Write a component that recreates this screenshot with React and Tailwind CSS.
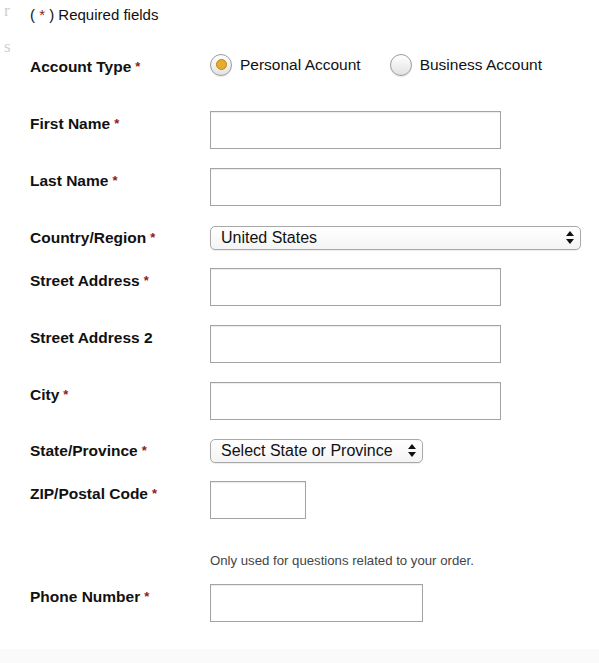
import React, { useState } from 'react';

const font = { fontFamily: '"Liberation Sans", Arial, sans-serif' };

function Star() {
  return <span className="text-[#8b1c1c] text-[13px] align-top ml-[4px]">*</span>;
}

function Label({ text, required, pad = 'pt-[4px]' }) {
  return (
    <div className={`w-[180px] shrink-0 ${pad} text-[15.5px] leading-[18px] font-bold text-[#111]`}>
      {text}
      {required && <Star />}
    </div>
  );
}

function TextBox({ width }) {
  return (
    <input
      type="text"
      className={`${width} h-[38px] border border-[#a3a3a3] bg-white shadow-[inset_0_1px_1px_rgba(0,0,0,0.08)] outline-none px-2 text-[15px]`}
    />
  );
}

function Arrows() {
  return (
    <svg width="8" height="13" viewBox="0 0 8 13" className="absolute right-[7px] top-[5px] pointer-events-none">
      <path d="M4 0 L8 5 L0 5 Z" fill="#111" />
      <path d="M4 13 L8 8 L0 8 Z" fill="#111" />
    </svg>
  );
}

function Select({ width, value, options }) {
  const [val, setVal] = useState(value);
  return (
    <div className={`relative ${width}`}>
      <select
        value={val}
        onChange={(e) => setVal(e.target.value)}
        className="appearance-none w-full h-[24px] rounded-[5px] border border-[#a8a8a8] bg-gradient-to-b from-white to-[#f4f4f4] pl-[10px] pr-[20px] text-[16px] leading-[20px] text-[#111] outline-none shadow-[0_1px_1px_rgba(0,0,0,0.08)]"
        style={font}
      >
        {options.map((o) => (
          <option key={o}>{o}</option>
        ))}
      </select>
      <Arrows />
    </div>
  );
}

function Radio({ checked, label, onClick }) {
  return (
    <button type="button" onClick={onClick} className="flex items-center gap-[8px] text-[15.5px] text-[#111]">
      <span className="w-[22px] h-[22px] rounded-full border border-[#9c9c9c] bg-gradient-to-b from-white to-[#e2e2e2] shadow-[0_1px_1px_rgba(0,0,0,0.1)] flex items-center justify-center">
        {checked && <span className="w-[11px] h-[11px] rounded-full bg-[#e6ac2c] border border-[#b98718]" />}
      </span>
      <span>{label}</span>
    </button>
  );
}

export default function App() {
  const [account, setAccount] = useState('personal');

  return (
    <div className="w-[599px] h-[663px] bg-white flex flex-col overflow-hidden" style={font}>
      <div className="flex flex-1">
        {/* cut-off text from the neighbouring column */}
        <div className="w-[30px] shrink-0 pl-[4px] text-[#cfcfcf] text-[17px]" style={{ fontFamily: '"Liberation Serif", serif' }}>
          <div className="pt-[2px] leading-[18px]">r</div>
          <div className="pt-[18px] leading-[18px]">s</div>
        </div>

        <div className="flex-1">
          <p className="pt-[6px] text-[15px] leading-[18px] text-[#111]">
            ( <span className="text-[#8b1c1c]">*</span> ) Required fields
          </p>

          <div className="flex mt-[29px]">
            <Label text="Account Type" required pad="pt-[5px]" />
            <div className="flex items-center gap-[29px]">
              <Radio checked={account === 'personal'} label="Personal Account" onClick={() => setAccount('personal')} />
              <Radio checked={account === 'business'} label="Business Account" onClick={() => setAccount('business')} />
            </div>
          </div>

          <div className="flex mt-[35px]">
            <Label text="First Name" required />
            <TextBox width="w-[291px]" />
          </div>

          <div className="flex mt-[19px]">
            <Label text="Last Name" required />
            <TextBox width="w-[291px]" />
          </div>

          <div className="flex mt-[20px]">
            <Label text="Country/Region" required pad="pt-[3px]" />
            <Select width="w-[371px]" value="United States" options={['United States', 'Canada', 'Mexico']} />
          </div>

          <div className="flex mt-[18px]">
            <Label text="Street Address" required />
            <TextBox width="w-[291px]" />
          </div>

          <div className="flex mt-[19px]">
            <Label text="Street Address 2" />
            <TextBox width="w-[291px]" />
          </div>

          <div className="flex mt-[19px]">
            <Label text="City" required />
            <TextBox width="w-[291px]" />
          </div>

          <div className="flex mt-[19px]">
            <Label text="State/Province" required pad="pt-[3px]" />
            <Select width="w-[213px]" value="Select State or Province" options={['Select State or Province', 'California', 'New York', 'Texas']} />
          </div>

          <div className="flex mt-[18px]">
            <Label text="ZIP/Postal Code" required />
            <TextBox width="w-[96px]" />
          </div>

          <p className="ml-[180px] mt-[34px] text-[13.2px] leading-[16px] text-[#444]">
            Only used for questions related to your order.
          </p>

          <div className="flex mt-[15px]">
            <Label text="Phone Number" required />
            <TextBox width="w-[213px]" />
          </div>
        </div>
      </div>
      <div className="h-[14px] bg-[#fafafa]" />
    </div>
  );
}
